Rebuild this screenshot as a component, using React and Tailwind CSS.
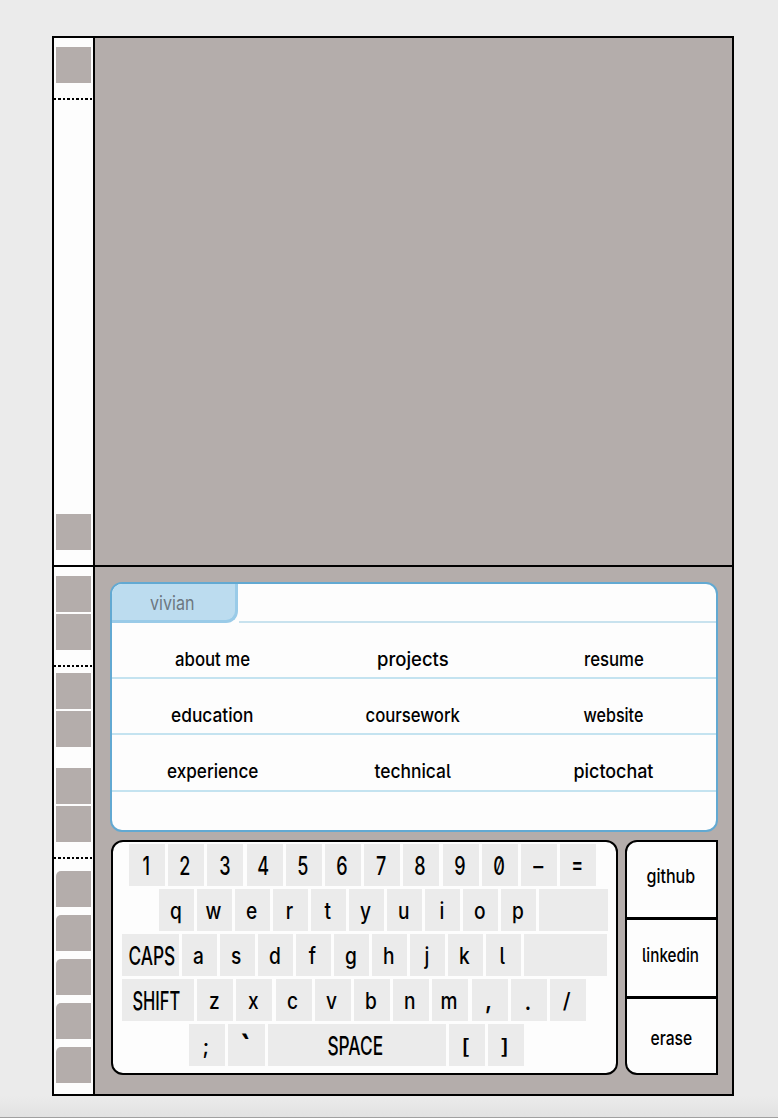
import { useLayoutEffect, useRef } from "react";

// Squeezes or stretches a word horizontally so that it takes `width` pixels.
function Fit({ width, className = "", children }) {
  const ref = useRef(null);
  useLayoutEffect(() => {
    const el = ref.current;
    const natural = el.offsetWidth;
    if (natural > 0) el.style.transform = `scaleX(${width / natural})`;
  }, [width]);
  return (
    <span ref={ref} className={`inline-block whitespace-nowrap ${className}`}>
      {children}
    </span>
  );
}

function Square({ className = "" }) {
  return <div className={`h-9 w-[35px] shrink-0 bg-[#b4adab] ${className}`} />;
}

function Dots({ className = "" }) {
  return (
    <div
      className={`h-[2px] w-full shrink-0 bg-[repeating-linear-gradient(90deg,#000_0px,#000_2.5px,#fdfdfd_2.5px,#fdfdfd_4.45px)] ${className}`}
    />
  );
}

const glyphShapes = {
  "–": "scale-x-[0.8]",
  "=": "scale-x-[0.72] -translate-y-[2px]",
  "`": "scale-[1.5] translate-y-[3px]",
  ",": "scale-x-[1] -translate-y-px",
  ".": "scale-x-[0.9]",
  ";": "scale-[0.85]",
  "/": "scale-[0.85] -translate-y-px",
  "[": "scale-x-[0.95] scale-y-[0.85]",
  "]": "scale-x-[0.95] scale-y-[0.85]",
};

function Key({ label = "", w = "w-9", fit, inset = "pr-[2px]" }) {
  const isLower = /^[a-z]$/.test(label);
  const size = isLower ? "text-[22.5px] pt-[3px]" : "text-[25px] pt-[3px]";
  const shape = isLower ? "scale-x-[0.85]" : glyphShapes[label] || "scale-x-[0.72]";
  return (
    <div className={`flex h-[42px] shrink-0 items-center justify-center bg-[#ebebeb] leading-none ${size} ${w} ${inset}`}>
      {fit ? <Fit width={fit}>{label}</Fit> : <span className={`inline-block ${shape}`}>{label}</span>}
    </div>
  );
}

const links = [
  [["about me", 75], ["projects", 72], ["resume", 60]],
  [["education", 82], ["coursework", 94], ["website", 60]],
  [["experience", 91], ["technical", 76], ["pictochat", 80]],
];

function MenuPanel() {
  return (
    <section className="ml-[15px] mt-[15px] flex h-[250px] w-[608px] flex-col overflow-hidden rounded-xl border-2 border-[#62a9d2] bg-[#fdfdfd] text-[19px] font-medium leading-none text-black">
      <div className="flex h-[39px] shrink-0">
        <div className="flex w-[126px] items-center justify-center rounded-br-xl border-b-[3px] border-r-[3px] border-[#9acbe8] bg-[#bcdcef] pr-[2px] pt-[2px] font-normal text-[#6c7780]">
          <Fit width={44}>vivian</Fit>
        </div>
        <div className="ml-px flex-1 border-b-2 border-[#c8e2ee]" />
      </div>
      {links.map((row) => (
        <div key={row[0][0]} className="grid h-[56.2px] shrink-0 grid-cols-3 border-b-2 border-[#c4e3f0] pr-[2px] pt-[18px]">
          {row.map(([name, width]) => (
            <div key={name} className="flex items-center justify-center">
              <Fit width={width}>{name}</Fit>
            </div>
          ))}
        </div>
      ))}
    </section>
  );
}

function Keyboard() {
  return (
    <section className="flex h-[235px] w-[507px] flex-col gap-[3.1px] rounded-xl border-2 border-black bg-[#fdfdfd] pt-[1.5px] font-medium text-black">
      <div className="ml-4 flex gap-[3.2px]">
        {[..."1234567890"].map((k) => <Key key={k} label={k} />)}
        <Key label="–" />
        <Key label="=" />
      </div>
      <div className="ml-[46px] flex gap-[3px]">
        {[..."qwertyuiop"].map((k) => <Key key={k} label={k} w="w-[35px]" />)}
        <Key w="w-[68.5px]" />
      </div>
      <div className="ml-[8.5px] flex gap-[3px]">
        <Key label="CAPS" w="w-[57.5px]" fit={47} inset="pl-[3px]" />
        {[..."asdfghjkl"].map((k) => <Key key={k} label={k} w="w-[35px]" />)}
        <Key w="w-[83px]" />
      </div>
      <div className="ml-[8.5px] flex gap-[3.2px]">
        <Key label="SHIFT" w="w-[72.5px]" fit={48} />
        {[..."zxcvbnm,./"].map((k) => <Key key={k} label={k} />)}
      </div>
      <div className="ml-[76px] flex gap-[3px]">
        <Key label=";" w="w-[36.3px]" />
        <Key label="`" w="w-[36.3px]" />
        <Key label="SPACE" w="w-[178px]" fit={56} />
        <Key label="[" />
        <Key label="]" />
      </div>
    </section>
  );
}

function SideButtons() {
  return (
    <section className="flex h-[235px] w-[93px] flex-col overflow-hidden rounded-l-xl border-2 border-black bg-[#fdfdfd] pr-px text-[19px] font-medium leading-none text-black">
      <div className="-mr-px flex h-[78px] items-center justify-center border-b-[3px] border-black pb-[6px] pr-[2px]">
        <Fit width={49}>github</Fit>
      </div>
      <div className="-mr-px flex h-[79px] items-center justify-center border-b-[3px] border-black pb-[5px] pr-[2px]">
        <Fit width={57}>linkedin</Fit>
      </div>
      <div className="flex flex-1 items-center justify-center pt-1">
        <Fit width={42}>erase</Fit>
      </div>
    </section>
  );
}

export default function App() {
  return (
    <main className="flex h-[1118px] w-[778px] flex-col overflow-hidden bg-[#ebebeb] font-['Inter',sans-serif] [font-feature-settings:'zero','cv05']">
      <div className="ml-[52px] mt-9 flex h-[1060px] w-[682px] shrink-0 flex-col border-2 border-black bg-[#b4adab]">
        <div className="flex h-[529px] shrink-0 border-b-2 border-black">
          <aside className="flex w-[41px] flex-col border-r-2 border-black bg-[#fdfdfd]">
            <Square className="ml-[2px] mt-[9px]" />
            <Dots className="mt-[15px]" />
            <Square className="ml-[2px] mt-auto mb-[15px]" />
          </aside>
          <div className="flex-1" />
        </div>
        <div className="flex flex-1">
          <aside className="flex w-[41px] shrink-0 flex-col border-r-2 border-black bg-[#fdfdfd]">
            <Square className="ml-[2px] mt-[9px]" />
            <Square className="ml-[2px] mt-[2px]" />
            <Dots className="mt-[15px]" />
            <Square className="ml-[2px] mt-[6px]" />
            <Square className="ml-[2px] mt-[2px]" />
            <Square className="ml-[2px] mt-[21px]" />
            <Square className="ml-[2px] mt-[2px]" />
            <Dots className="mt-[15px]" />
            <div className="ml-[2px] mt-[12.4px] flex flex-col gap-[7.8px]">
              <Square className="rounded-tl-[5px]" />
              <Square className="rounded-tl-[5px]" />
              <Square className="rounded-tl-[5px]" />
              <Square className="rounded-tl-[5px]" />
              <Square className="rounded-tl-[5px]" />
            </div>
          </aside>
          <div className="flex flex-1 flex-col">
            <MenuPanel />
            <div className="ml-4 mt-2 flex gap-[7px]">
              <Keyboard />
              <SideButtons />
            </div>
          </div>
        </div>
      </div>
      <footer className="flex-1 border-b border-[#a0a0a0] bg-linear-to-b from-[#ebebeb] to-[#e2e2e2]" />
    </main>
  );
}
